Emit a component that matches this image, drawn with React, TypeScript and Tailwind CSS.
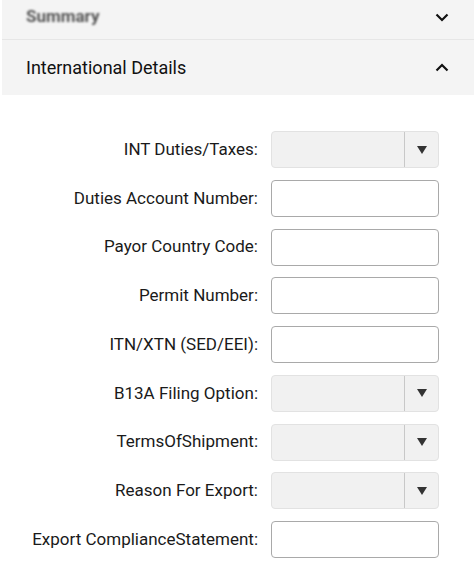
import { useState } from "react"

type Field = { label: string; kind: "select" | "input" }

const fields: Field[] = [
  { label: "INT Duties/Taxes:", kind: "select" },
  { label: "Duties Account Number:", kind: "input" },
  { label: "Payor Country Code:", kind: "input" },
  { label: "Permit Number:", kind: "input" },
  { label: "ITN/XTN (SED/EEI):", kind: "input" },
  { label: "B13A Filing Option:", kind: "select" },
  { label: "TermsOfShipment:", kind: "select" },
  { label: "Reason For Export:", kind: "select" },
  { label: "Export ComplianceStatement:", kind: "input" },
]

function Chevron({ up }: { up?: boolean }) {
  return (
    <svg width="16" height="16" viewBox="0 0 16 16" className="text-[#111]">
      <path
        d={up ? "M2.5 10.5 L8 5 L13.5 10.5" : "M2.5 5.5 L8 11 L13.5 5.5"}
        fill="none"
        stroke="currentColor"
        strokeWidth="2.2"
      />
    </svg>
  )
}

function SelectBox() {
  return (
    <div className="flex h-[37px] w-[168px] rounded-[4px] border border-[#e2e2e2] bg-[#f1f1f1]">
      <div className="flex-1 border-r border-[#c8c8c8]" />
      <div className="flex w-[33px] items-center justify-center">
        <svg width="10" height="8" viewBox="0 0 10 8">
          <path d="M0 0 H10 L5 8 Z" fill="#333" />
        </svg>
      </div>
    </div>
  )
}

export default function App() {
  const [open] = useState(true)

  return (
    <div className="min-h-[581px] w-[474px] bg-white font-['Roboto',sans-serif]">
      {/* Accordion headers */}
      <div className="ml-[2px] bg-[#f4f4f4]">
        <div className="flex h-[40px] items-center justify-between border-b border-[#e6e6e6] pl-[24px] pr-[24px] pb-[6px]">
          <span className="text-[17px] font-bold text-[#555] blur-[1px]">Summary</span>
          <Chevron />
        </div>
        <div className="flex h-[55px] items-center justify-between pl-[24px] pr-[24px]">
          <span className="text-[18px] text-[#111]">International Details</span>
          <Chevron up={open} />
        </div>
      </div>

      {/* International details form */}
      <div className="flex flex-col gap-[11.75px] pt-[36px] pb-[20px]">
        {fields.map((f) => (
          <div key={f.label} className="flex items-center">
            <label className="w-[258px] text-right text-[17px] text-[#1a1a1a]">{f.label}</label>
            <div className="ml-[13px]">
              {f.kind === "select" ? (
                <SelectBox />
              ) : (
                <input
                  type="text"
                  className="h-[37px] w-[168px] rounded-[4px] border border-[#a9a9a9] bg-white px-2 outline-none"
                />
              )}
            </div>
          </div>
        ))}
      </div>
    </div>
  )
}
